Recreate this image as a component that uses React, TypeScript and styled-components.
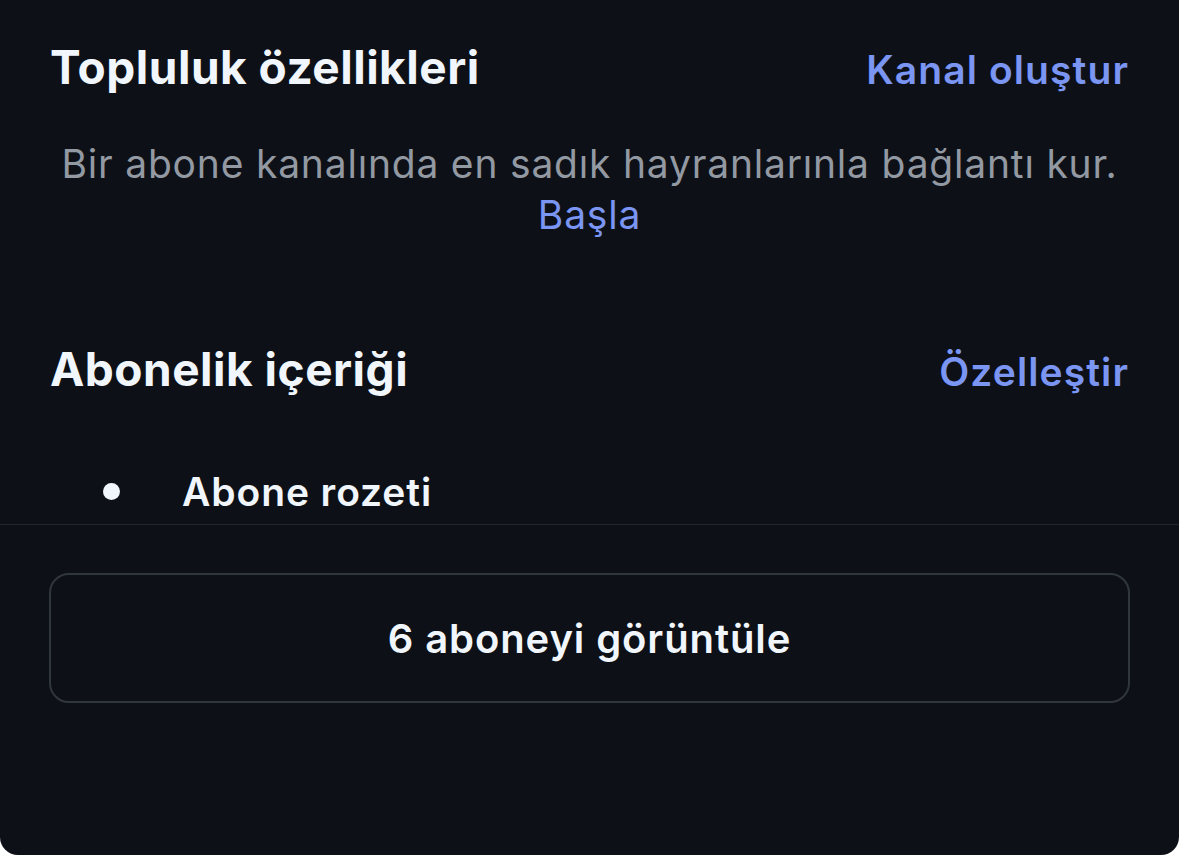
import React from "react";
import styled, { createGlobalStyle } from "styled-components";

const GlobalStyle = createGlobalStyle`
  html, body {
    margin: 0;
    padding: 0;
    background: #ffffff;
  }
  body {
    font-family: Inter, "Noto Sans", "Liberation Sans", sans-serif;
    -webkit-font-smoothing: antialiased;
  }
`;

const Panel = styled.div`
  width: 1179px;
  height: 855px;
  background: #0d1117;
  border-radius: 0 0 18px 18px;
  display: flex;
  flex-direction: column;
  overflow: hidden;
`;

const Section = styled.section<{ $top: number }>`
  padding: ${(p) => p.$top}px 50px 0 50px;
  display: flex;
  flex-direction: column;
`;

const HeaderRow = styled.div`
  display: flex;
  justify-content: space-between;
  align-items: baseline;
`;

const Title = styled.h2`
  margin: 0;
  font-size: 46px;
  line-height: 56px;
  font-weight: 700;
  color: #f0f6fc;
  letter-spacing: 0.5px;
`;

const ActionLink = styled.a`
  font-size: 39px;
  line-height: 56px;
  font-weight: 600;
  color: #7a95f2;
  letter-spacing: 1.1px;
  text-decoration: none;
  cursor: pointer;
`;

const Description = styled.p`
  margin: 40px 0 0 0;
  font-size: 39px;
  line-height: 51px;
  font-weight: 400;
  color: #9399a2;
  letter-spacing: 0.8px;
  text-align: center;
`;

const InlineLink = styled.a`
  color: #7a95f2;
  text-decoration: none;
  cursor: pointer;
`;

const List = styled.ul`
  list-style: none;
  margin: 66px 0 7px 0;
  padding: 0 0 0 53px;
`;

const ListItem = styled.li`
  display: flex;
  align-items: center;
  gap: 62px;
  font-size: 39px;
  line-height: 51px;
  font-weight: 600;
  color: #f0f6fc;
  letter-spacing: 0.9px;
`;

const Bullet = styled.span`
  width: 17px;
  height: 17px;
  border-radius: 50%;
  background: #f0f6fc;
  flex: none;
`;

const Divider = styled.hr`
  margin: 0;
  border: none;
  height: 1px;
  background: #21262d;
`;

const ButtonArea = styled.div`
  padding: 48px 49px 0 49px;
`;

const OutlineButton = styled.button`
  width: 100%;
  height: 130px;
  background: transparent;
  border: 2px solid #30363d;
  border-radius: 20px;
  font-family: inherit;
  font-size: 40px;
  font-weight: 600;
  letter-spacing: 0.9px;
  color: #f0f6fc;
  cursor: pointer;
`;

export default function App() {
  return (
    <>
      <GlobalStyle />
      <Panel>
        <Section $top={39}>
          <HeaderRow>
            <Title>Topluluk özellikleri</Title>
            <ActionLink>Kanal oluştur</ActionLink>
          </HeaderRow>
          <Description>
            Bir abone kanalında en sadık hayranlarınla bağlantı kur.
            <br />
            <InlineLink>Başla</InlineLink>
          </Description>
        </Section>
        <Section $top={101}>
          <HeaderRow>
            <Title>Abonelik içeriği</Title>
            <ActionLink>Özelleştir</ActionLink>
          </HeaderRow>
          <List>
            <ListItem>
              <Bullet />
              Abone rozeti
            </ListItem>
          </List>
        </Section>
        <Divider />
        <ButtonArea>
          <OutlineButton>6 aboneyi görüntüle</OutlineButton>
        </ButtonArea>
      </Panel>
    </>
  );
}
